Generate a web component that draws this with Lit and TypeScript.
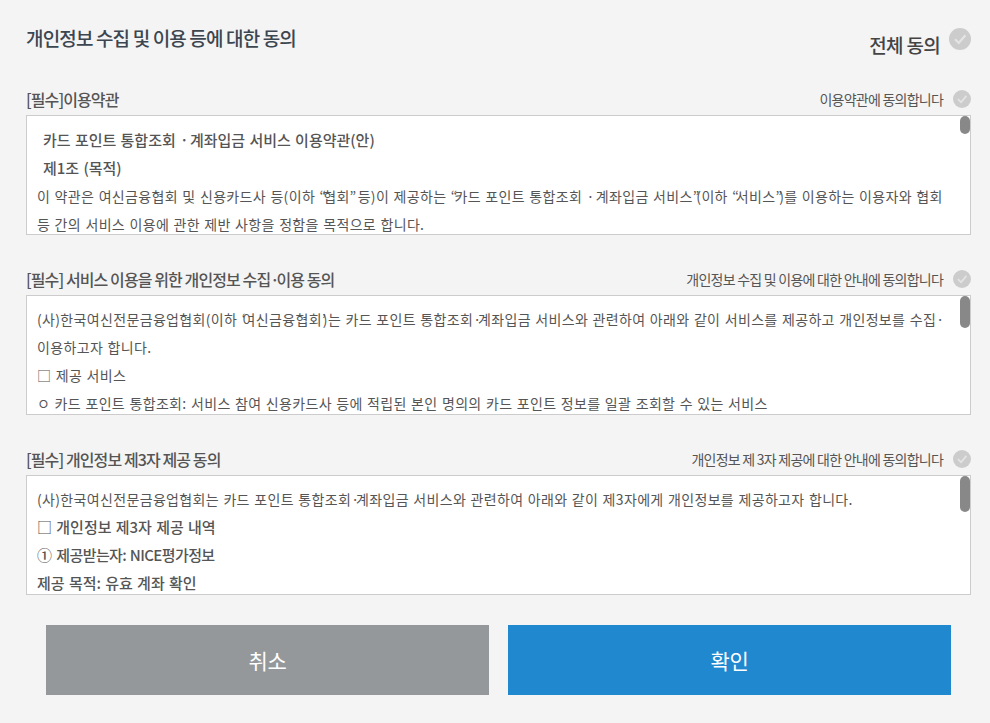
import { LitElement, html, css } from "lit";
import { customElement } from "lit/decorators.js";

const check = (big: boolean) => html`<svg class="chk ${big ? "big" : ""}" viewBox="0 0 22 22"><circle cx="11" cy="11" r="11" fill="#cccccc"/><path d="M6 11.2 L9.8 15 L16.4 7.2" fill="none" stroke="#e4e4e4" stroke-width="2.2"/></svg>`;
const dot = html`<span class="dot">·</span>`;
const q = (s: string) => html`<span class="q">${s}</span>`;

@customElement("app-root")
export class AppRoot extends LitElement {
  static styles = css`
    :host { display: block; width: 990px; height: 723px; background: #f4f4f4; overflow: hidden;
      font-family: "Noto Sans CJK KR", "Noto Sans", sans-serif; color: #555; }
    .page { padding: 24px 19px 0 26px; }
    .head { display: flex; justify-content: space-between; height: 61px; }
    h1 { margin: 0; font-size: 19px; line-height: 28px; font-weight: 500; color: #3c4650; letter-spacing: -0.85px; }
    .all { display: flex; align-items: flex-start; gap: 9px; font-size: 19px; font-weight: 500; color: #444; letter-spacing: -0.7px; line-height: 28px; padding-top: 7px; }
    .chk { width: 18px; height: 18px; display: block; flex: none; }
    .chk.big { width: 22px; height: 22px; margin-top: -3px; }
    .sec { margin-bottom: 30px; }
    .sec-head { display: flex; justify-content: space-between; align-items: center; height: 28px; margin-bottom: 2px; }
    .sec-title { font-size: 16px; font-weight: 500; color: #555; letter-spacing: -0.9px; }
    .agree { display: flex; align-items: center; gap: 10px; font-size: 14px; color: #555; letter-spacing: -0.76px; }
    .box { position: relative; box-sizing: border-box; height: 120px; background: #fff; border: 1px solid #ccc; overflow: hidden; padding: 9px 28px 0 10px;
      font-size: 14px; line-height: 28px; color: #555; }
    .box p { margin: 0; white-space: nowrap; letter-spacing: 0.34px; word-spacing: 0.9px; }
    .box p.b { font-weight: 500; font-size: 15px; letter-spacing: 0; }
    .box p.in { padding-left: 6px; }
    .box p.in:first-child { margin-top: 1px; }
    .dot { letter-spacing: -3px; }
    .q { letter-spacing: -3px; }
    .tight { letter-spacing: -0.6px; }
    .thumb { position: absolute; top: 0; right: 0; width: 10px; border-radius: 5px; background: #888; }
    .btns { display: flex; gap: 19px; padding-left: 20px; }
    .btn { width: 443px; height: 70px; display: flex; align-items: center; justify-content: center; color: #fff; font-size: 21px; font-weight: 400; letter-spacing: -0.3px; }
    .cancel { background: #94989b; }
    .ok { background: #2088cf; }
  `;

  sec(title: unknown, agree: string, thumb: number, body: unknown) {
    return html`<section class="sec">
      <div class="sec-head"><span class="sec-title">${title}</span><span class="agree">${agree}${check(false)}</span></div>
      <div class="box">${body}<div class="thumb" style="height:${thumb}px"></div></div>
    </section>`;
  }

  render() {
    return html`<div class="page">
      <div class="head"><h1>개인정보 수집 및 이용 등에 대한 동의</h1><div class="all">전체 동의 ${check(true)}</div></div>
      ${this.sec("[필수]이용약관", "이용약관에 동의합니다", 18, html`
        <p class="b in">카드 포인트 통합조회 ${dot} 계좌입금 서비스 이용약관(안)</p>
        <p class="b in">제1조 (목적)</p>
        <p>이 약관은 여신금융협회 및 신용카드사 등(이하 ${q("“")}협회${q("”")} 등)이 제공하는 ${q("“")}카드 포인트 통합조회 ${dot} 계좌입금 서비스${q("”")}(이하 ${q("“")}서비스${q("”")})를 이용하는 이용자와 협회</p>
        <p>등 간의 서비스 이용에 관한 제반 사항을 정함을 목적으로 합니다.</p>`)}
      ${this.sec(html`[필수] 서비스 이용을 위한 개인정보 수집${dot}이용 동의`, "개인정보 수집 및 이용에 대한 안내에 동의합니다", 32, html`
        <p>(사)한국여신전문금융업협회(이하 ${q("‘")}여신금융협회${q("’")})는 카드 포인트 통합조회${dot}계좌입금 서비스와 관련하여 아래와 같이 서비스를 제공하고 개인정보를 수집${dot}</p>
        <p>이용하고자 합니다.</p>
        <p>□ 제공 서비스</p>
        <p>ㅇ 카드 포인트 통합조회: 서비스 참여 신용카드사 등에 적립된 본인 명의의 카드 포인트 정보를 일괄 조회할 수 있는 서비스</p>`)}
      ${this.sec("[필수] 개인정보 제3자 제공 동의", "개인정보 제 3자 제공에 대한 안내에 동의합니다", 36, html`
        <p>(사)한국여신전문금융업협회는 카드 포인트 통합조회${dot}계좌입금 서비스와 관련하여 아래와 같이 제3자에게 개인정보를 제공하고자 합니다.</p>
        <p class="b">□ 개인정보 제3자 제공 내역</p>
        <p class="b">① <span class="tight">제공받는자: NICE평가정보</span></p>
        <p class="b">제공 목적: 유효 계좌 확인</p>`)}
      <div class="btns"><div class="btn cancel">취소</div><div class="btn ok">확인</div></div>
    </div>`;
  }
}
